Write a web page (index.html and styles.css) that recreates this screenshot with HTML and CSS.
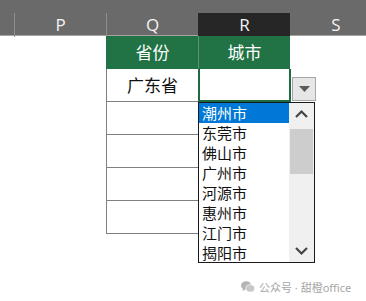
FILE: index.html
```html
<!DOCTYPE html>
<html lang="zh">
<head>
    <meta charset="UTF-8">
    <title>数据验证下拉列表</title>
    <link rel="stylesheet" href="styles.css">
</head>
<body>
    <div class="colbar">
        <div class="col-edge"></div>
        <div class="col-head">P</div>
        <div class="col-head">Q</div>
        <div class="col-head active">R</div>
        <div class="col-head last">S</div>
    </div>

    <div class="sheet">
        <div class="blank"></div>
        <div class="cell head">省份</div>
        <div class="cell head city">城市</div>

        <div class="blank"></div>
        <div class="cell">广东省</div>
        <div class="cell current"></div>

        <div class="blank"></div>
        <div class="cell"></div>
        <div class="cell empty"></div>

        <div class="blank"></div>
        <div class="cell"></div>
        <div class="cell empty"></div>

        <div class="blank"></div>
        <div class="cell"></div>
        <div class="cell empty"></div>

        <div class="blank"></div>
        <div class="cell"></div>
        <div class="cell empty"></div>

        <!-- dropdown arrow next to the active cell -->
        <div class="drop-btn">
            <svg width="11" height="6" viewBox="0 0 11 6"><polygon points="0,0 11,0 5.5,6" fill="#5a5a5a"/></svg>
        </div>

        <!-- open validation list -->
        <div class="drop-list">
            <ul class="items">
                <li class="selected">潮州市</li>
                <li>东莞市</li>
                <li>佛山市</li>
                <li>广州市</li>
                <li>河源市</li>
                <li>惠州市</li>
                <li>江门市</li>
                <li>揭阳市</li>
            </ul>
            <div class="scroll">
                <svg class="arrow" width="25" height="22" viewBox="0 0 25 22"><polyline points="7,14 12.5,8.5 18,14" fill="none" stroke="#444" stroke-width="2.2"/></svg>
                <div class="thumb"></div>
                <div class="track"></div>
                <svg class="arrow" width="25" height="22" viewBox="0 0 25 22"><polyline points="7,8 12.5,13.5 18,8" fill="none" stroke="#444" stroke-width="2.2"/></svg>
            </div>
        </div>
    </div>

    <div class="watermark">
        <svg width="14" height="12" viewBox="0 0 15 13">
            <ellipse cx="5.5" cy="5" rx="5.5" ry="4.6" fill="#b4b4b4"/>
            <polygon points="2,8 1.5,11 5,8.5" fill="#b4b4b4"/>
            <ellipse cx="10" cy="8" rx="4.8" ry="4" fill="#c8c8c8" stroke="#fff" stroke-width="0.8"/>
        </svg>
        <span>公众号 · 甜橙office</span>
    </div>
</body>
</html>
```

FILE: styles.css
```css
body {
    margin: 0;
    width: 366px;
    height: 301px;
    background: #fff;
    font-family: "Noto Sans CJK SC", "Noto Sans", sans-serif;
    position: relative;
    overflow: hidden;
}

/* column letters bar */
.colbar {
    background-color: #6a6a6a;
    border-bottom: 1px solid #a3a3a3;
    padding-top: 13px;
    height: 22px;
    display: grid;
    grid-template-columns: 14px 92px 92px 92px 1fr;
}

.col-head {
    border-left: 1px solid #8e8e8e;
    color: #f4f4f4;
    font-family: "Open Sans", "Noto Sans", sans-serif;
    font-size: 17px;
    line-height: 24px;
    text-align: center;
}

.col-head.active {
    background-color: #262626;
    border-left-color: #262626;
}

.col-head.last {
    border-left: none;
    width: 92px;
}

/* cells */
.sheet {
    position: relative;
    display: grid;
    grid-template-columns: 106px 92px 92px;
    grid-auto-rows: 33px;
}

.cell {
    border-left: 1px solid #808080;
    border-bottom: 1px solid #808080;
    font-size: 17px;
    line-height: 32px;
    text-align: center;
    color: #111;
}

.cell.head {
    background-color: #217346;
    color: #fff;
    border-left-color: #217346;
    border-bottom-color: #217346;
}

.cell.head.city {
    border-left-color: #5a9477;
}

.cell.current {
    border: 2px solid #1e6b40;
    border-top: none;
    margin-right: -1px;
}

.cell.empty {
    border: none;
}

.drop-btn {
    position: absolute;
    left: 292px;
    top: 41px;
    width: 22px;
    height: 22px;
    background: #e6e6e6;
    border: 1px solid #a6a6a6;
    display: flex;
    align-items: center;
    justify-content: center;
}

.drop-list {
    position: absolute;
    left: 198px;
    top: 66px;
    width: 115px;
    height: 159px;
    border: 1px solid #1a1a1a;
    background: #fff;
    display: flex;
}

.items {
    list-style: none;
    margin: 0;
    padding: 0;
    flex: 1;
}

.items li {
    height: 20px;
    line-height: 20px;
    font-size: 15px;
    padding-left: 3px;
    color: #111;
}

.items li.selected {
    background-color: #0078d7;
    color: #fff;
}

.scroll {
    width: 25px;
    background: #f0f0f0;
    display: flex;
    flex-direction: column;
}

.scroll .arrow {
    display: block;
    flex: none;
}

.thumb {
    height: 45px;
    margin: 4px 1px 0;
    background: #cdcdcd;
}

.track {
    flex: 1;
}

.watermark {
    position: absolute;
    left: 241px;
    top: 279px;
    display: flex;
    align-items: center;
    gap: 4px;
    color: #a6a6a6;
    font-family: "Noto Sans", "Noto Sans CJK SC", sans-serif;
    font-size: 11px;
    white-space: nowrap;
}
```
